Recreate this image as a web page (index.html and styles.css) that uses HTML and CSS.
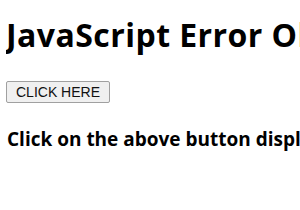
FILE: index.html
```html
<!DOCTYPE html>
<html lang="en">
<head>
    <meta charset="UTF-8">
    <meta name="viewport" content="width=device-width, initial-scale=1.0">
    <title>JavaScript Error Object</title>
    <link rel="stylesheet" href="styles.css">
</head>
<body>
    <h1>JavaScript Error Object Properties</h1>
    <button class="btn-click" id="click-btn">CLICK HERE</button>
    <h3 class="result">Click on the above button displays the error name and message</h3>
</body>
</html>
```
FILE: styles.css
```css
html {
    overflow: hidden;
}

body {
    margin: 8px 0 8px 6px;
    font-family: 'Open Sans', 'DejaVu Sans', sans-serif;
    color: #000;
    background: #fff;
    white-space: nowrap;
}

h1 {
    font-size: 32px;
    font-weight: bold;
    letter-spacing: 0.45px;
    margin: 6px 0 24px;
    line-height: 42px;
}

.btn-click {
    font-family: 'Liberation Sans', Arial, sans-serif;
    font-size: 14px;
    padding: 1px 9px;
    height: 22px;
    color: #111;
    background: #f0f0f0;
    border: 1px solid #a0a0a0;
    border-radius: 2px;
}

.result {
    font-size: 19px;
    font-weight: bold;
    margin: 23px 0 0 1px;
}
```
